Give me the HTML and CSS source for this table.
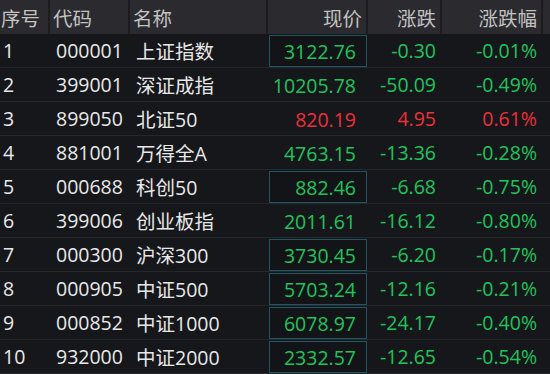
FILE: index.html
```html
<!DOCTYPE html>
<html lang="zh-CN">
<head>
<meta charset="utf-8">
<link rel="stylesheet" href="styles.css">
</head>
<body>
<div class="table">
  <div class="row head">
    <div class="c c-no">序号</div>
    <div class="c c-code">代码</div>
    <div class="c c-name">名称</div>
    <div class="c c-num">现价</div>
    <div class="c c-chg">涨跌</div>
    <div class="c c-pct">涨跌幅</div>
    <div class="c c-end"></div>
  </div>
  <div class="row">
    <div class="c c-no">1</div><div class="c c-code">000001</div><div class="c c-name">上证指数</div>
    <div class="c c-num down boxed"><span class="box">3122.76</span></div><div class="c c-chg down">-0.30</div><div class="c c-pct down">-0.01%</div><div class="c c-end"></div>
  </div>
  <div class="row">
    <div class="c c-no">2</div><div class="c c-code">399001</div><div class="c c-name">深证成指</div>
    <div class="c c-num down"><span class="box plain">10205.78</span></div><div class="c c-chg down">-50.09</div><div class="c c-pct down">-0.49%</div><div class="c c-end"></div>
  </div>
  <div class="row">
    <div class="c c-no">3</div><div class="c c-code">899050</div><div class="c c-name">北证50</div>
    <div class="c c-num up"><span class="box plain">820.19</span></div><div class="c c-chg up">4.95</div><div class="c c-pct up">0.61%</div><div class="c c-end"></div>
  </div>
  <div class="row">
    <div class="c c-no">4</div><div class="c c-code">881001</div><div class="c c-name">万得全A</div>
    <div class="c c-num down"><span class="box plain">4763.15</span></div><div class="c c-chg down">-13.36</div><div class="c c-pct down">-0.28%</div><div class="c c-end"></div>
  </div>
  <div class="row">
    <div class="c c-no">5</div><div class="c c-code">000688</div><div class="c c-name">科创50</div>
    <div class="c c-num down"><span class="box">882.46</span></div><div class="c c-chg down">-6.68</div><div class="c c-pct down">-0.75%</div><div class="c c-end"></div>
  </div>
  <div class="row">
    <div class="c c-no">6</div><div class="c c-code">399006</div><div class="c c-name">创业板指</div>
    <div class="c c-num down"><span class="box plain">2011.61</span></div><div class="c c-chg down">-16.12</div><div class="c c-pct down">-0.80%</div><div class="c c-end"></div>
  </div>
  <div class="row">
    <div class="c c-no">7</div><div class="c c-code">000300</div><div class="c c-name">沪深300</div>
    <div class="c c-num down"><span class="box">3730.45</span></div><div class="c c-chg down">-6.20</div><div class="c c-pct down">-0.17%</div><div class="c c-end"></div>
  </div>
  <div class="row">
    <div class="c c-no">8</div><div class="c c-code">000905</div><div class="c c-name">中证500</div>
    <div class="c c-num down"><span class="box">5703.24</span></div><div class="c c-chg down">-12.16</div><div class="c c-pct down">-0.21%</div><div class="c c-end"></div>
  </div>
  <div class="row">
    <div class="c c-no">9</div><div class="c c-code">000852</div><div class="c c-name">中证1000</div>
    <div class="c c-num down"><span class="box">6078.97</span></div><div class="c c-chg down">-24.17</div><div class="c c-pct down">-0.40%</div><div class="c c-end"></div>
  </div>
  <div class="row">
    <div class="c c-no">10</div><div class="c c-code">932000</div><div class="c c-name">中证2000</div>
    <div class="c c-num down"><span class="box">2332.57</span></div><div class="c c-chg down">-12.65</div><div class="c c-pct down">-0.54%</div><div class="c c-end"></div>
  </div>
</div>
</body>
</html>
```

FILE: styles.css
```css
html, body {
  margin: 0;
  padding: 0;
  background: #15171b;
}
body {
  width: 550px;
  height: 374px;
  overflow: hidden;
  font-family: "Open Sans", "Noto Sans CJK SC", sans-serif;
  font-size: 19.5px;
  color: #e8e8e8;
}
.table {
  display: flex;
  flex-direction: column;
}
.row {
  display: grid;
  grid-template-columns: 50px 80px 138px 100px 74px 101px 7px;
  height: 34px;
  box-sizing: border-box;
  border-bottom: 1px solid #25272c;
}
.row.head {
  background: #2b2b2f;
  color: #c2c2c2;
  border-bottom: none;
}
.c {
  display: flex;
  align-items: center;
  white-space: nowrap;
  min-width: 0;
  box-sizing: border-box;
}
.head .c {
  border-right: 2px solid #1c1c20;
}
.head .c-end {
  border-right: none;
}
.c-no { padding-left: 3px; }
.head .c-no { padding-left: 1px; }
.c-code { padding-left: 6px; }
.head .c-code { padding-left: 3px; }
.c-name { padding-left: 6px; }
.head .c-name { padding-left: 3px; }
.c-num, .c-chg, .c-pct { justify-content: flex-end; }
.head .c-num { padding-right: 4px; }
.head .c-chg { padding-right: 4px; }
.head .c-pct { padding-right: 4px; }
.c-chg { padding-right: 6px; }
.c-pct { padding-right: 6px; }
.c-num { padding: 1px 1px 0 1px; align-items: stretch; }
.head .c-num { align-items: center; padding-left: 0; }
.box {
  flex: 1;
  display: flex;
  align-items: center;
  justify-content: flex-end;
  padding-right: 10px;
  border: 1px solid #1d5660;
  background: #121417;
}
.box.plain {
  border-color: transparent;
  background: transparent;
}
.down { color: #22c35c; }
.up { color: #ef2f3a; }
```
